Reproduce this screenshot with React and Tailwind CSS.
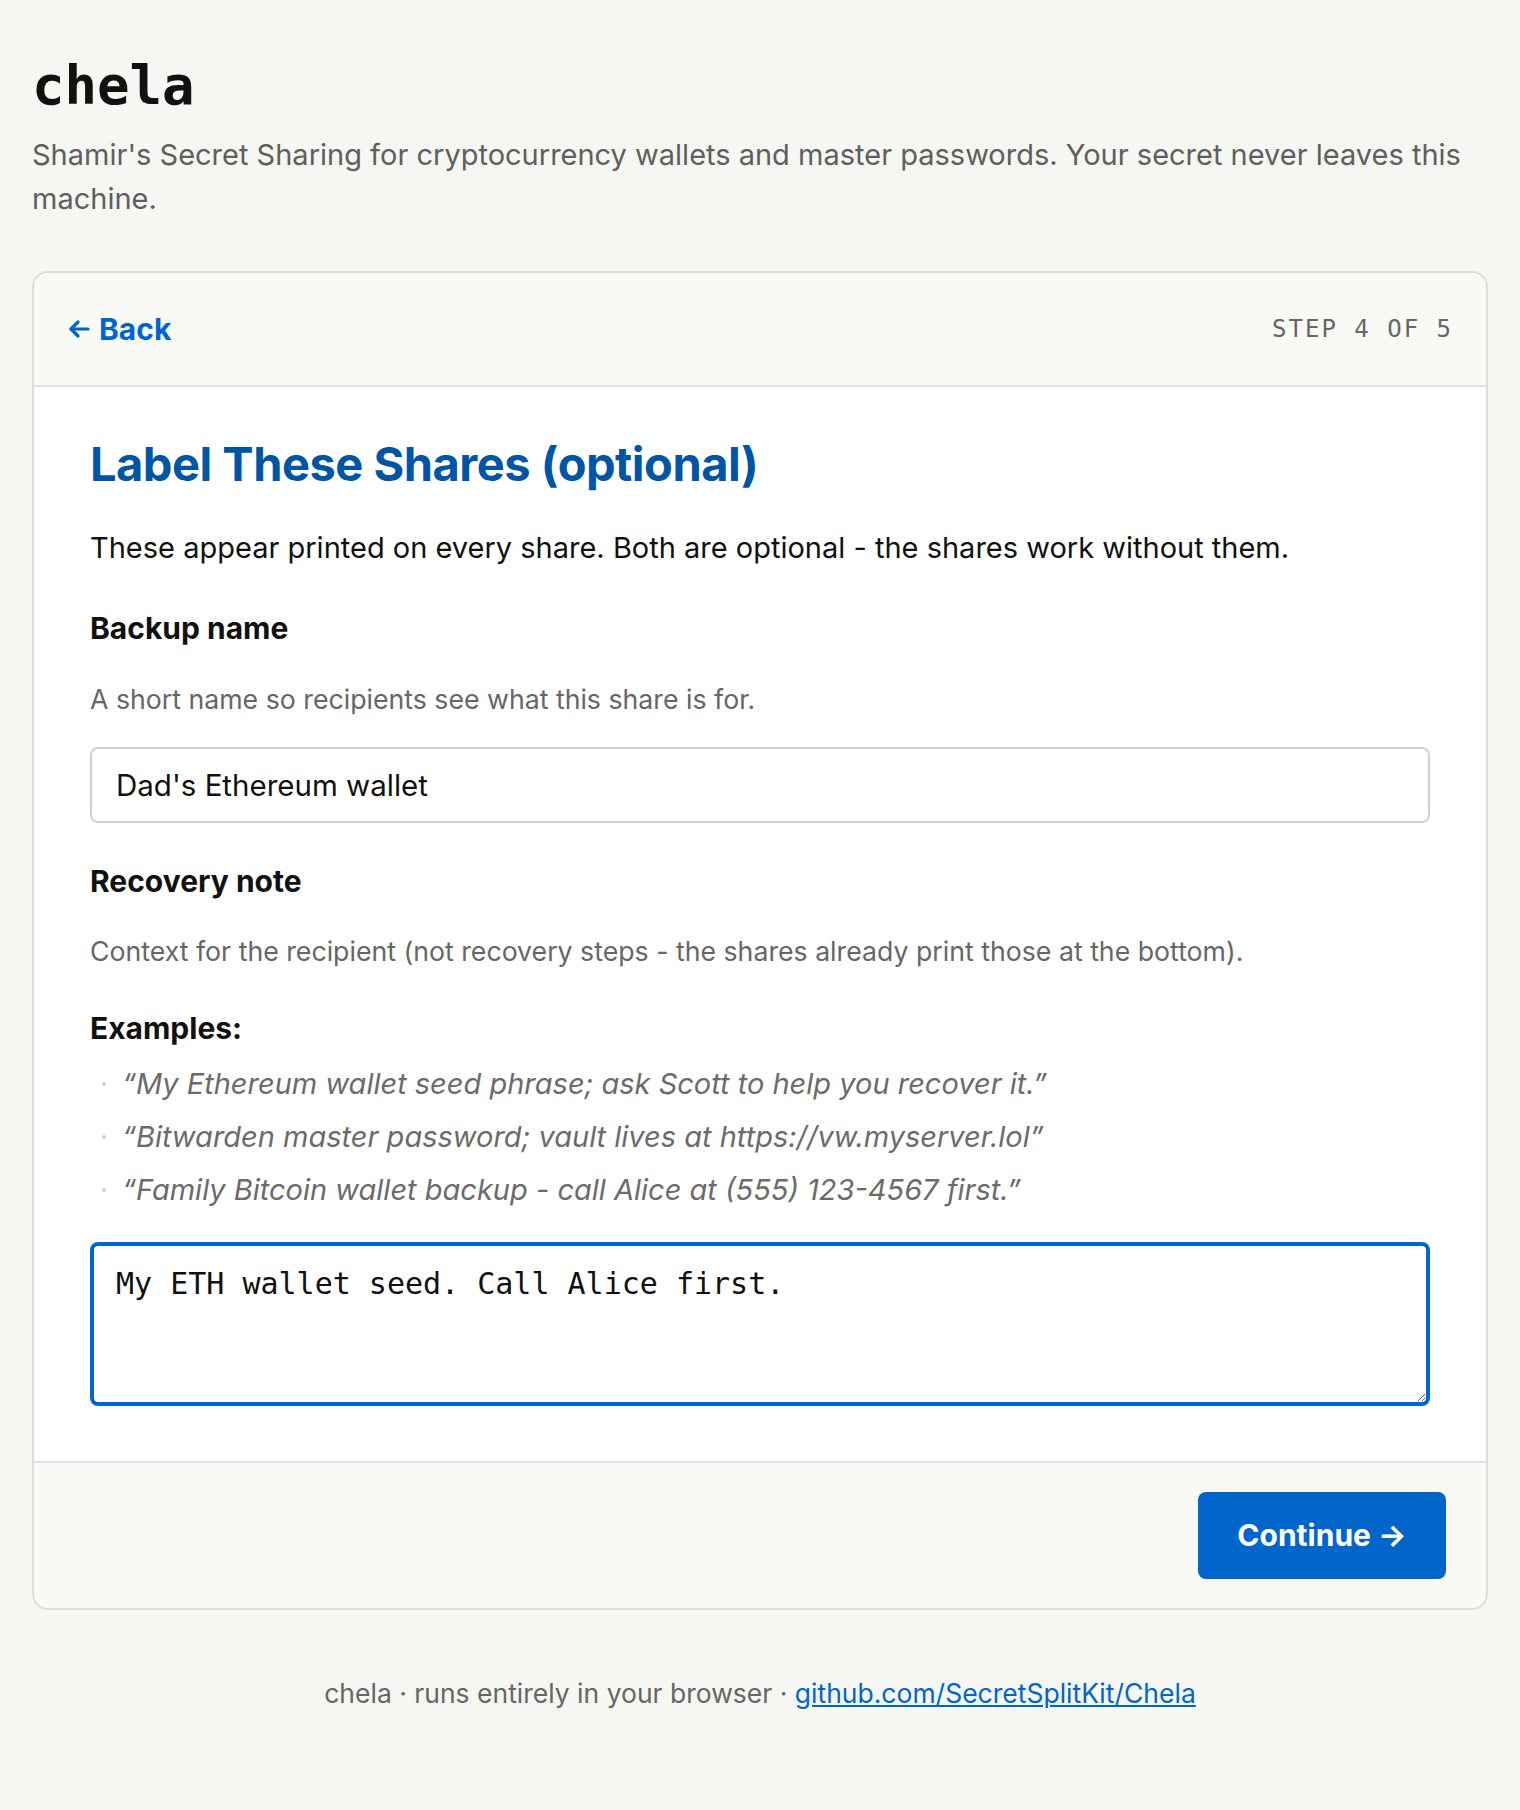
import React, { useState } from 'react';

const EXAMPLES = [
  '“My Ethereum wallet seed phrase; ask Scott to help you recover it.”',
  '“Bitwarden master password; vault lives at https://vw.myserver.lol”',
  '“Family Bitcoin wallet backup - call Alice at (555) 123-4567 first.”',
];

const sans = "font-['Inter','Liberation_Sans',sans-serif]";
const mono = "font-['DejaVu_Sans_Mono','Liberation_Mono',monospace]";

export default function App() {
  const [name, setName] = useState("Dad's Ethereum wallet");
  const [note, setNote] = useState('My ETH wallet seed. Call Alice first.');

  return (
    <div className={`min-h-[1810px] bg-[#f6f6f2] text-[#111] ${sans}`}>
      <div className="px-8 pt-[52px]">
        {/* Header */}
        <h1 className={`${mono} text-[54px] font-bold leading-[68px] text-[#111]`}>chela</h1>
        <p className="mt-[13px] text-[29px] leading-[44px] text-[#5f5f5f]">
          Shamir's Secret Sharing for cryptocurrency wallets and master passwords. Your secret never leaves this machine.
        </p>

        {/* Wizard card */}
        <div className="mt-[50px] rounded-2xl border-2 border-[#dddddb] bg-white overflow-hidden">
          <div className="flex items-center justify-between border-b-2 border-[#e2e2df] bg-[#f9f9f6] px-[33px] h-[114px]">
            <button className="flex items-center gap-2 text-[30px] font-bold text-[#0066cc]">
              <svg width="24" height="24" viewBox="0 0 24 24" fill="none" stroke="currentColor" strokeWidth="3.2" strokeLinecap="round" strokeLinejoin="round">
                <path d="M21 12H4" />
                <path d="M11 5l-7 7 7 7" />
              </svg>
              Back
            </button>
            <span className={`${mono} text-[24px] tracking-[2px] text-[#666]`}>STEP 4 OF 5</span>
          </div>

          <div className="px-[56px] pt-[49px] pb-[55px]">
            <h2 className="text-[47px] font-bold leading-[56px] tracking-[-0.5px] text-[#0055a5]">
              Label These Shares (optional)
            </h2>
            <p className="mt-[36px] text-[29px] leading-[40px] text-[#111]">
              These appear printed on every share. Both are optional - the shares work without them.
            </p>

            <label className="mt-[40px] block text-[30px] font-bold leading-[40px]">Backup name</label>
            <p className="mt-[34px] text-[26.7px] leading-[34px] text-[#666]">
              A short name so recipients see what this share is for.
            </p>
            <input
              value={name}
              onChange={e => setName(e.target.value)}
              className="mt-[31px] block w-full h-[76px] rounded-lg border-2 border-[#d0d0cd] bg-white px-[24px] text-[29.5px] text-[#111] outline-none"
            />

            <label className="mt-[38px] block text-[30px] font-bold leading-[40px]">Recovery note</label>
            <p className="mt-[33px] text-[26.7px] leading-[34px] text-[#666]">
              Context for the recipient (not recovery steps - the shares already print those at the bottom).
            </p>

            <p className="mt-[40px] text-[30px] font-bold leading-[40px]">Examples:</p>
            <ul className="mt-[9px]">
              {EXAMPLES.map(ex => (
                <li key={ex} className="flex items-center h-[53px]">
                  <span className="ml-[12px] mr-[16px] h-[4px] w-[4px] rounded-full bg-[#cfcfcc]" />
                  <span className="text-[29px] italic text-[#6b6b6b]">{ex}</span>
                </li>
              ))}
            </ul>

            <textarea
              value={note}
              onChange={e => setNote(e.target.value)}
              rows={3}
              className={`${mono} mt-[26px] block w-full h-[164px] rounded-lg border-4 border-[#0066cc] bg-white px-[22px] py-[18px] text-[30px] leading-[40px] text-[#111] outline-none`}
            />
          </div>

          <div className="flex justify-end border-t-2 border-[#e2e2df] bg-[#f9f9f6] pl-8 pr-[40px] py-[29px]">
            <button className="h-[87px] w-[248px] rounded-lg bg-[#0066cc] text-[30px] font-bold text-white">
              Continue →
            </button>
          </div>
        </div>

        <footer className="pt-[64px] pb-[68px] text-center text-[26.5px] text-[#666]">
          chela · runs entirely in your browser ·{' '}
          <a href="#" className="text-[#0066cc] underline">github.com/SecretSplitKit/Chela</a>
        </footer>
      </div>
    </div>
  );
}
